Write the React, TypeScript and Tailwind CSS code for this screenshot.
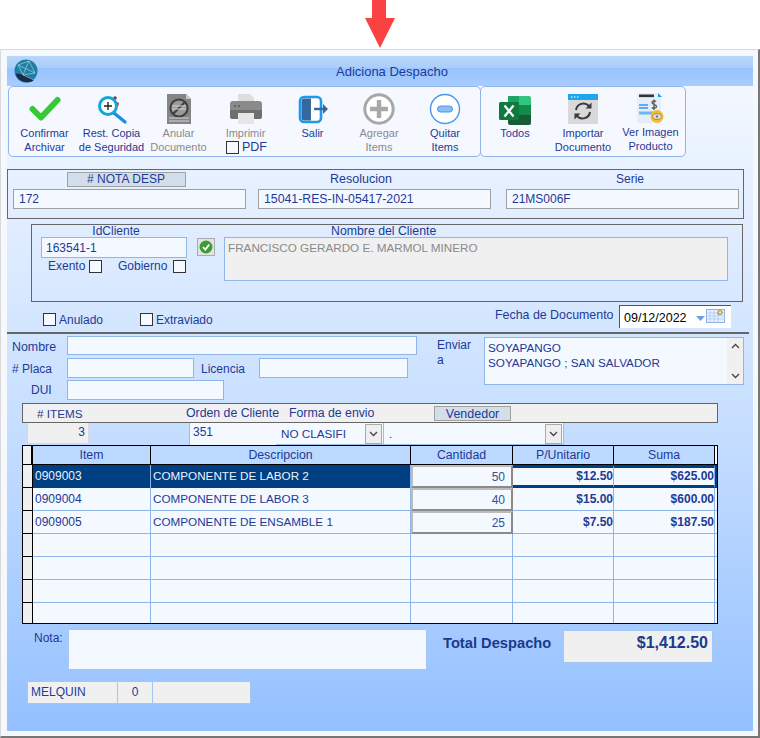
import React from "react";

const Arrow = () => (
  <svg width="32" height="49" viewBox="0 0 32 49" className="ml-[364px] block">
    <path d="M8 0H22V18H31L16 48L1 18H8Z" fill="#fb4242" />
  </svg>
);

const Globe = () => (
  <svg width="24" height="24" viewBox="0 0 24 24" className="ml-[7px] mt-[3px] shrink-0">
    <circle cx="12" cy="12" r="11.5" fill="#1f7ea3" />
    <path d="M1.5 15 C6 14 13 17 20 21 C16 25 5 24 1.5 15Z" fill="#1b2a49" />
    <path d="M4 6 L15 2 L21 14 L9 16 Z M4 6 L21 14 M15 2 L9 16 M9 16 L20 21" fill="none" stroke="#b8dcec" strokeWidth="0.6" />
  </svg>
);

const CheckIcon = () => (
  <svg width="32" height="32" viewBox="0 0 32 32"><path d="M3.5 16 L12 24.5 L28.5 7" fill="none" stroke="#35c935" strokeWidth="6" strokeLinecap="round" strokeLinejoin="round" /></svg>
);
const MagIcon = () => (
  <svg width="32" height="32" viewBox="0 0 32 32">
    <circle cx="19" cy="5" r="1.8" fill="#7a3b4a" /><circle cx="21" cy="11" r="2" fill="#e0384a" />
    <path d="M18 20 L29 29" stroke="#1d8fe0" strokeWidth="3.4" strokeLinecap="round" />
    <circle cx="12" cy="13" r="8.5" fill="#fff" stroke="#12a5d5" strokeWidth="3" />
    <path d="M8 13H16M12 9V17" stroke="#222" strokeWidth="1.4" />
  </svg>
);
const DocIcon = () => (
  <svg width="32" height="32" viewBox="0 0 32 32">
    <path d="M4 1H23L28 6V31H4Z" fill="#858585" />
    <path d="M23 1L28 6H23Z" fill="#c8c8c8" />
    <circle cx="16" cy="15" r="8.6" fill="#9a9a9a" stroke="#3f3f3f" strokeWidth="2" />
    <path d="M10 21 L22 9" stroke="#3f3f3f" strokeWidth="2" />
    <path d="M9 13H23M9 16H23M6 25H26M6 28H26" stroke="#d4d4d4" strokeWidth="1.2" />
  </svg>
);
const PrinterIcon = () => (
  <svg width="32" height="32" viewBox="0 0 32 32">
    <path d="M8 1H20L24 5V10H8Z" fill="#dedede" />
    <path d="M0 11 Q0 8 3 8H29Q32 8 32 11V17H0Z" fill="#8a8a8a" />
    <path d="M0 17H32V24Q32 26 30 26H2Q0 26 0 24Z" fill="#6f6f6f" />
    <path d="M8 20H24V31H8Z" fill="#e6e6e6" />
    <circle cx="5" cy="13" r="1" fill="#555" /><circle cx="9" cy="13" r="1" fill="#555" />
  </svg>
);
const DoorIcon = () => (
  <svg width="32" height="32" viewBox="0 0 32 32">
    <rect x="3" y="4" width="21" height="25" rx="4" fill="#fff" stroke="#1f98f0" strokeWidth="2.6" />
    <path d="M4.5 8Q4.5 5.5 7 5.5H14V27.500H7Q4.5 27.500 4.500 25Z" fill="#36689e" />
    <path d="M17 16H28" stroke="#36689e" strokeWidth="2.4" />
    <path d="M26 11L31 16L26 21Z" fill="#36689e" />
  </svg>
);
const PlusIcon = () => (
  <svg width="32" height="32" viewBox="0 0 32 32">
    <circle cx="16" cy="16" r="14.2" fill="#fff" stroke="#a8a8a8" strokeWidth="3" />
    <path d="M16 7V25M7 16H25" stroke="#a8a8a8" strokeWidth="4.4" />
  </svg>
);
const MinusIcon = () => (
  <svg width="32" height="32" viewBox="0 0 32 32">
    <circle cx="16" cy="16" r="14.5" fill="#fff" stroke="#4a98f0" strokeWidth="1.4" />
    <rect x="8.5" y="13" width="15" height="6" rx="3" fill="#8dbbf2" stroke="#4a98f0" strokeWidth="1" />
  </svg>
);
const ExcelIcon = () => (
  <svg width="32" height="32" viewBox="0 0 32 32">
    <path d="M9 3H20V12H9Z" fill="#21a366" />
    <path d="M20 3H30Q32 3 32 5V12H20Z" fill="#33c481" />
    <path d="M9 12H32V22H9Z" fill="#107c41" />
    <path d="M20 12H32V22H20Z" fill="#138a4a" />
    <path d="M9 22H32V30Q32 32 30 32H11Q9 32 9 30Z" fill="#185c37" />
    <rect x="0" y="9" width="20" height="18" rx="1.5" fill="#0f7a3e" />
    <path d="M5.5 12.5L14.5 23.5M14.5 12.5L5.5 23.5" stroke="#fff" strokeWidth="2.3" />
  </svg>
);
const ImportIcon = () => (
  <svg width="32" height="32" viewBox="0 0 32 32">
    <rect x="1" y="1" width="30" height="30" fill="#d9d9d9" />
    <rect x="1" y="1" width="30" height="6" fill="#1ea6ee" />
    <path d="M4 4H5.5M7 4H8.5M10 4H11.5" stroke="#fff" strokeWidth="1.2" />
    <path d="M9 17 A7.5 7.5 0 0 1 22 13" fill="none" stroke="#3a3a3a" strokeWidth="2" />
    <path d="M23 19 A7.5 7.5 0 0 1 10 23" fill="none" stroke="#3a3a3a" strokeWidth="2" />
    <path d="M24.5 9.5V15.5H18.5Z" fill="#3a3a3a" /><path d="M7.5 26.5V20.5H13.5Z" fill="#3a3a3a" />
  </svg>
);
const InvoiceIcon = () => (
  <svg width="32" height="32" viewBox="0 0 32 32">
    <path d="M2 0H22L26 4V30H2Z" fill="#e6eefb" />
    <path d="M23 0L27 4H23Z" fill="#1e9bea" />
    <rect x="4" y="1.5" width="15" height="2.6" fill="#333" />
    <path d="M4 12H13M4 15H13" stroke="#2f96ec" strokeWidth="1.6" />
    <path d="M4 20H20" stroke="#6fb6f2" strokeWidth="3" />
    <path d="M21 8.5C20 7.5 17 7.5 17 9.5C17 12 21.5 11 21.5 13.5C21.5 15.5 18 15.5 17 14.5M19 6.5V17" fill="none" stroke="#555" strokeWidth="1.3" />
    <circle cx="22" cy="23.5" r="6.5" fill="#f5bc2c" />
    <ellipse cx="22" cy="23.5" rx="4.2" ry="2.8" fill="#e6e6e6" stroke="#8a7a45" strokeWidth="0.8" />
    <circle cx="22" cy="23.5" r="1.3" fill="#777" />
  </svg>
);

const Tool = ({ icon, a, b, tone = "text-[#1e3a96]", w = "w-[67px]", up = false }: { icon: React.ReactNode; a: string; b?: React.ReactNode; tone?: string; w?: string; up?: boolean }) => (
  <div className={`${w} flex flex-col items-center pt-[6px] shrink-0 text-[11px] leading-[14px] whitespace-nowrap ${tone}`}>
    <div className="h-[32px] w-[32px]">{icon}</div>
    <div className={up ? "mt-0" : "mt-[1px]"}>{a}</div>
    {b && <div>{b}</div>}
  </div>
);

const Box = ({ cb }: { cb?: string }) => (
  <span className={`inline-block w-[13px] h-[13px] border border-[#333] bg-[#f6f9ff] shrink-0 ${cb ?? ""}`} />
);

const ChevronDown = () => (
  <svg width="9" height="6" viewBox="0 0 9 6"><path d="M1 1L4.5 4.5L8 1" fill="none" stroke="#444" strokeWidth="1.3" /></svg>
);
const ChevronUp = () => (
  <svg width="9" height="6" viewBox="0 0 9 6"><path d="M1 5L4.5 1.5L8 5" fill="none" stroke="#444" strokeWidth="1.3" /></svg>
);

const SelectBox = ({ w, text }: { w: string; text: string }) => (
  <div className={`${w} h-[22px] bg-[#f4f8ff] border-b border-r border-[#9dbde8] flex items-center justify-between pl-[5px] pr-[1px] pt-[1px] text-[11.7px]`}>
    <span>{text}</span>
    <span className="w-[17px] h-[20px] bg-[#efefef] border border-[#aaa] flex items-center justify-center"><ChevronDown /></span>
  </div>
);

const cols = ["w-[118px]", "w-[260px]", "w-[102px]", "w-[101px]", "w-[101px]"];

const rows = [
  { item: "0909003", desc: "COMPONENTE DE LABOR 2", qty: "50", pu: "$12.50", sum: "$625.00", sel: true },
  { item: "0909004", desc: "COMPONENTE DE LABOR 3", qty: "40", pu: "$15.00", sum: "$600.00" },
  { item: "0909005", desc: "COMPONENTE DE ENSAMBLE 1", qty: "25", pu: "$7.50", sum: "$187.50" },
  {}, {}, {}, {},
] as { item?: string; desc?: string; qty?: string; pu?: string; sum?: string; sel?: boolean }[];

const Row = ({ r, last }: { r: (typeof rows)[number]; last: boolean }) => {
  const h = last ? "h-[20px]" : "h-[23px]";
  const line = last ? "" : "border-b border-[#8fb6ea]";
  const base = "border-r border-[#8fb6ea] flex items-center shrink-0 pb-[1px]";
  const money = r.sel
    ? "border-t-[3px] border-b-[3px] border-t-[#003f82] border-b-[#003f82]"
    : line;
  return (
    <div className={`flex ${h}`}>
      <div className={`w-[10px] shrink-0 bg-[#f0f0f0] border-r border-black ${last ? "" : "border-b border-b-black"}`} />
      <div className={`${cols[0]} ${base} pl-[2px] ${r.sel ? "bg-[#003f82] text-[#eaf2ff]" : line}`}>{r.item}</div>
      <div className={`${cols[1]} ${base} pl-[2px] text-[11.7px] ${r.sel ? "bg-[#003f82] text-[#eaf2ff]" : line}`}>{r.desc}</div>
      {r.qty ? (
        <div className={`${cols[2]} shrink-0 flex items-center justify-end pr-[6px] pt-[1px] bg-[#f4f8ff] border-2 border-[#bcbcbc] border-r-[#8a8a8a] border-b-[#8a8a8a] text-[#33509a]`}>{r.qty}</div>
      ) : (
        <div className={`${cols[2]} ${base} ${line}`} />
      )}
      <div className={`${cols[3]} ${base} justify-end font-bold ${money}`}>{r.pu}</div>
      <div className={`${cols[4]} ${base} justify-end font-bold ${money}`}>{r.sum}</div>
      <div className={`w-[2px] shrink-0 ${r.sel ? "bg-[#003f82]" : line}`} />
    </div>
  );
};

export default function App() {
  return (
    <div className="w-[760px] h-[738px] bg-white overflow-hidden [font-family:Liberation_Sans,Arial,sans-serif] text-[12px] leading-[14px] text-[#1e3a96]">
      <Arrow />
      <div className="h-[689px] bg-[#f5f9fe] border-t border-l border-t-[#d9d9d9] border-l-[#d9d9d9] border-r-2 border-r-[#777] border-b-2 border-b-[#777] pl-[6px] pt-[6px]">
        <div className="w-[746px] h-[675px] bg-linear-to-b from-[#f7faff] via-[#c6deff] via-55% to-[#94c0ff]">
          {/* title */}
          <div className="h-[30px] flex bg-[linear-gradient(#b9d6fb_0%,#abcdfa_40%,#97c3ff_40%,#a8ccff_100%)]">
            <Globe />
            <div className="flex-1 text-center pt-[8px] pr-[7px] text-[13px] leading-[15px]">Adiciona Despacho</div>
          </div>

          {/* toolbar */}
          <div className="flex h-[71px] ml-[1px]">
            <div className="w-[473px] border border-[#8fb5ea] rounded-[5px] flex pl-[2px] bg-[#f5f9ff]">
              <Tool icon={<CheckIcon />} a="Confirmar" b="Archivar" />
              <Tool icon={<MagIcon />} a="Rest. Copia" b="de Seguridad" />
              <Tool icon={<DocIcon />} a="Anular" b="Documento" tone="text-[#8a8a8a]" />
              <Tool icon={<PrinterIcon />} a="Imprimir" tone="text-[#8a8a8a]" b={<span className="flex items-center gap-[3px] ml-[2px] text-[12.5px] leading-[14px] text-[#1e3a96]"><Box />PDF</span>} />
              <Tool icon={<DoorIcon />} a="Salir" />
              <Tool w="w-[66px]" icon={<PlusIcon />} a="Agregar" b="Items" tone="text-[#8a8a8a]" />
              <Tool w="w-[66px]" icon={<MinusIcon />} a="Quitar" b="Items" />
            </div>
            <div className="w-[206px] -ml-[1px] border border-[#8fb5ea] rounded-[5px] flex bg-[#f5f9ff]">
              <Tool w="w-[68px]" icon={<ExcelIcon />} a="Todos" />
              <Tool w="w-[68px]" icon={<ImportIcon />} a="Importar" b="Documento" />
              <Tool w="w-[67px]" up icon={<InvoiceIcon />} a="Ver Imagen" b="Producto" />
            </div>
          </div>

          {/* document box */}
          <div className="mt-[12px] w-[737px] h-[50px] border border-[#666] flex pl-[5px] pt-[2px] gap-[12px]">
            <div className="w-[233px] flex flex-col">
              <div className="ml-[54px] w-[119px] h-[15px] bg-[#d3deeb] border border-[#a0a0a0] text-center pr-[1px] leading-[13px]"># NOTA DESP</div>
              <div className="mt-[2px] h-[20px] bg-[#f4f8ff] border border-[#a0a0a0] pl-[5px] leading-[19px]">172</div>
            </div>
            <div className="w-[233px] flex flex-col">
              <div className="h-[15px] text-center pr-[27px] text-[12.5px] leading-[14px]">Resolucion</div>
              <div className="mt-[2px] h-[20px] bg-[#f4f8ff] border border-[#a0a0a0] pl-[5px] text-[12.3px] leading-[19px]">15041-RES-IN-05417-2021</div>
            </div>
            <div className="w-[233px] ml-[3px] flex flex-col">
              <div className="h-[15px] text-center pl-[15px] leading-[14px]">Serie</div>
              <div className="mt-[2px] h-[20px] bg-[#f4f8ff] border border-[#a0a0a0] pl-[5px] leading-[19px]">21MS006F</div>
            </div>
          </div>

          {/* client box */}
          <div className="mt-[5px] ml-[24px] w-[712px] h-[78px] border border-[#666] flex pl-[9px]">
            <div className="w-[146px] shrink-0">
              <div className="h-[12px] text-center leading-[12px] pl-[4px]">IdCliente</div>
              <div className="h-[21px] bg-[#f4f8ff] border border-[#8fb6ea] pl-[4px] leading-[20px]">163541-1</div>
              <div className="flex items-center h-[14px] mt-[1px]">
                <span className="ml-[7px] w-[41px]">Exento</span>
                <Box />
                <span className="ml-[16px] w-[55px]">Gobierno</span>
                <Box />
              </div>
            </div>
            <div className="ml-[10px] mt-[13px] w-[18px] h-[18px] bg-[#e4e4e4] border border-[#aaa] flex items-center justify-center shrink-0">
              <svg width="14" height="14" viewBox="0 0 14 14">
                <circle cx="7" cy="7" r="6.5" fill="#3f9b35" />
                <path d="M4 7L6.3 9.5L10.3 4.5" fill="none" stroke="#fff" strokeWidth="1.8" />
              </svg>
            </div>
            <div className="ml-[9px] flex-1">
              <div className="h-[12px] leading-[12px] pl-[107px] text-[12.3px]">Nombre del Cliente</div>
              <div className="w-[504px] h-[44px] bg-[#f0f0f0] border border-[#8fb6ea] pl-[3px] pt-[3px] text-[11.7px] text-[#8a8a8a]">FRANCISCO GERARDO E. MARMOL MINERO</div>
            </div>
          </div>

          {/* flags + date */}
          <div className="h-[30px] flex">
            <div className="ml-[36px] w-[97px] mt-[11px] flex items-center h-[13px]"><Box /><span className="ml-[3px]">Anulado</span></div>
            <div className="w-[355px] mt-[11px] flex items-center h-[13px]"><Box /><span className="ml-[3px]">Extraviado</span></div>
            <div className="mt-[6px] w-[124px] h-[14px] text-[12.4px]">Fecha de Documento</div>
            <div className="mt-[3px] w-[112px] h-[23px] bg-white border-t border-l border-t-[#555] border-l-[#555] flex items-center text-black text-[12.5px] pl-[4px] pt-[1px]">
              <span className="w-[72px]">09/12/2022</span>
              <svg width="9" height="5" viewBox="0 0 9 5" className="mt-[2px]"><path d="M0 0H9L4.5 5Z" fill="#6f9fe0" /></svg>
              <svg width="19" height="14" viewBox="0 0 19 14" className="ml-[1px] -mt-[3px]">
                <rect x="0.5" y="0.5" width="18" height="13" fill="#e8f0ff" stroke="#8fb0e8" />
                <path d="M0 4H19M0 7H19M0 10H19M4 0V14M8 0V14M12 0V14" stroke="#a8c4f0" strokeWidth="0.7" />
                <circle cx="14" cy="3.5" r="2" fill="#f0e6c0" stroke="#a8904a" strokeWidth="1.2" />
              </svg>
            </div>
          </div>
          <div className="w-[742px] h-[2px] bg-[#666]" />

          {/* carrier + ship to */}
          <div className="h-[69px] flex">
            <div className="w-[410px] shrink-0 pt-[2px]">
              <div className="flex items-center h-[19px]">
                <span className="w-[60px] pl-[5px] pt-[3px] text-[12.4px]">Nombre</span>
                <div className="w-[350px] h-[19px] bg-[#f4f8ff] border border-[#8fb6ea]" />
              </div>
              <div className="flex items-center h-[20px] mt-[3px]">
                <span className="w-[60px] pl-[5px] pt-[1px]"># Placa</span>
                <div className="w-[127px] h-[20px] bg-[#f4f8ff] border border-[#8fb6ea]" />
                <span className="w-[65px] pl-[7px] pt-[1px]">Licencia</span>
                <div className="w-[149px] h-[20px] bg-[#f4f8ff] border border-[#8fb6ea]" />
              </div>
              <div className="flex items-center h-[20px] mt-[2px]">
                <span className="w-[60px] pl-[24px]">DUI</span>
                <div className="w-[157px] h-[20px] bg-[#f4f8ff] border border-[#8fb6ea]" />
              </div>
            </div>
            <div className="w-[67px] pl-[20px] pt-[4px] leading-[15px]">Enviar<br />a</div>
            <div className="w-[260px] h-[48px] mt-[3px] bg-[#f4f8ff] border border-[#8fb6ea] flex">
              <div className="flex-1 pl-[3px] pt-[2px] text-[11.7px] leading-[15px]">SOYAPANGO<br />SOYAPANGO ; SAN SALVADOR</div>
              <div className="w-[16px] bg-[#f0f0f0] flex flex-col items-center justify-between py-[5px]"><ChevronUp /><ChevronDown /></div>
            </div>
          </div>

          {/* items bar */}
          <div className="ml-[15px] w-[696px] h-[20px] bg-[#f0f0f0] border border-[#666] flex items-center">
            <span className="ml-[14px] w-[149px] mt-[1px] text-[11.7px]"># ITEMS</span>
            <span className="w-[103px] text-[12.3px]">Orden de Cliente</span>
            <span className="w-[145px] text-[12.3px]">Forma de envio</span>
            <span className="w-[77px] h-[15px] bg-[#d3deeb] border border-[#a0a0a0] text-center text-[12.5px] leading-[14px]">Vendedor</span>
          </div>
          <div className="flex h-[22px] items-start">
            <div className="ml-[20px] w-[62px] h-[21px] bg-[#f0f0f0] border border-[#d8d8d8] border-t-0 text-right pr-[3px] leading-[18px] font-normal">3</div>
            <div className="ml-[100px] w-[87px] h-[22px] bg-[#f4f8ff] border-l border-[#9dbde8] pl-[3px] leading-[18px]">351</div>
            <SelectBox w="w-[108px]" text="NO CLASIFI" />
            <SelectBox w="w-[180px]" text="." />
          </div>

          {/* grid */}
          <div className="ml-[15px] w-[696px] h-[179px] border border-black bg-[#f4f8ff] text-[12px]">
            <div className="flex h-[19px] bg-[#bcd9ff] border-b border-black">
              <div className="w-[10px] shrink-0 bg-[#f0f0f0] border-r-2 border-black" />
              {["Item", "Descripcion", "Cantidad", "P/Unitario", "Suma"].map((t, i) => (
                <div key={t} className={`${cols[i]} shrink-0 border-r border-black text-center text-[12.3px] leading-[19px]`}>{t}</div>
              ))}
              <div className="w-[2px] bg-[#f4f8ff]" />
            </div>
            {rows.map((r, i) => <Row key={i} r={r} last={i === 6} />)}
          </div>

          {/* note + total */}
          <div className="flex mt-[5px] h-[41px]">
            <span className="ml-[27px] w-[34px] pt-[2px]">Nota:</span>
            <div className="w-[359px] h-[41px] bg-[#f4f8ff] border border-[#a5c6f2]" />
            <span className="ml-[16px] w-[120px] pt-[6px] text-[14.7px] leading-[16px] font-bold text-[#1a3a8c] whitespace-nowrap">Total Despacho</span>
            <div className="mt-[1px] w-[150px] h-[33px] bg-[#f0f0f0] border border-[#a5c6f2] text-right pr-[4px] pt-[3px] text-[16px] leading-[18px] font-bold text-[#1a3a8c]">$1,412.50</div>
          </div>

          {/* status */}
          <div className="flex mt-[11px] ml-[20px] h-[23px]">
            <div className="w-[91px] bg-[#f0f0f0] border border-[#a5c6f2] pl-[3px] leading-[20px]">MELQUIN</div>
            <div className="w-[36px] bg-[#f0f0f0] border border-[#a5c6f2] -ml-px text-center leading-[20px]">0</div>
            <div className="w-[99px] bg-[#f0f0f0] border border-[#a5c6f2] -ml-px" />
          </div>
        </div>
      </div>
    </div>
  );
}
